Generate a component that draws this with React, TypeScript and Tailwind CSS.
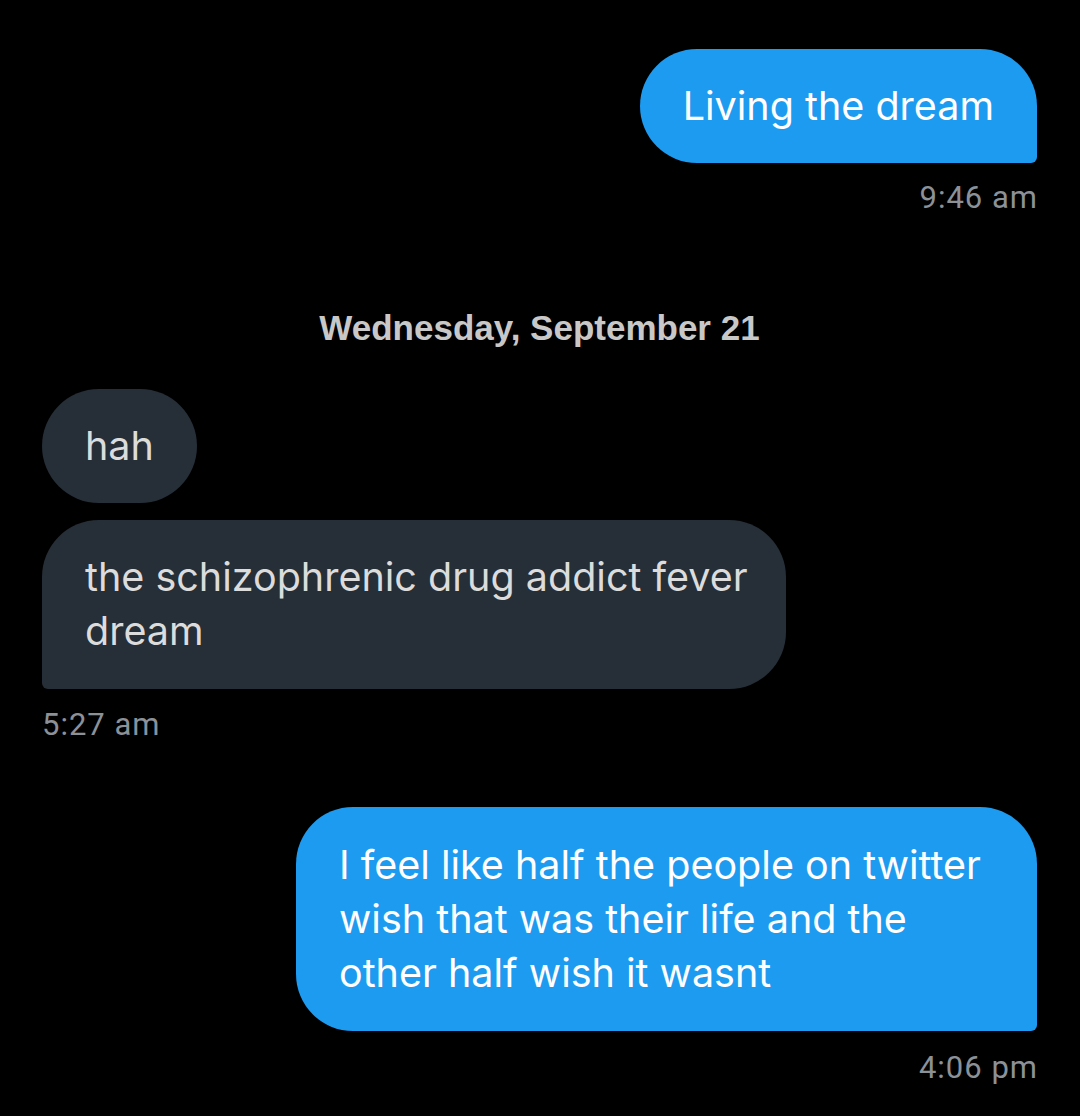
import React from "react";

function Stamp({ children, right }: { children: React.ReactNode; right?: boolean }) {
  return (
    <div
      className={`text-[31px] leading-[36px] tracking-[1px] text-[#8b9197] font-['Roboto',sans-serif] ${right ? "text-right -mr-[1px]" : "text-left"}`}
    >
      {children}
    </div>
  );
}

export default function App() {
  return (
    <div className="w-[1080px] h-[1116px] bg-black overflow-hidden pl-[42px] pr-[43px] pt-[49px]">
      <div className="flex justify-end">
        <div className="bg-[#1d9bf0] text-white rounded-[57px] rounded-br-[6px] px-[43px] py-[30px] text-[39.5px] leading-[54px] whitespace-nowrap font-['Inter',sans-serif]">
          Living the dream
        </div>
      </div>
      <div className="mt-[17px]">
        <Stamp right>9:46 am</Stamp>
      </div>
      <div className="mt-[92px] text-center text-[35px] leading-[40px] font-bold text-[#c8c8c8] font-['Liberation_Sans',Arial,sans-serif]">
        Wednesday, September 21
      </div>
      <div className="mt-[41px] flex flex-col items-start gap-[17px]">
        <div className="bg-[#262f37] text-[#dcdcdc] rounded-[57px] px-[43px] py-[30px] text-[39.5px] leading-[54px] whitespace-nowrap font-['Inter',sans-serif]">
          hah
        </div>
        <div className="bg-[#262f37] text-[#dcdcdc] rounded-[57px] rounded-bl-[6px] px-[43px] pt-[30px] pb-[31px] text-[39.5px] leading-[54px] whitespace-nowrap font-['Inter',sans-serif] w-[744px]">
          the schizophrenic drug addict fever
          <br />
          dream
        </div>
      </div>
      <div className="mt-[18px]">
        <Stamp>5:27 am</Stamp>
      </div>
      <div className="mt-[64px] flex justify-end">
        <div className="bg-[#1d9bf0] text-white rounded-[57px] rounded-br-[6px] px-[43px] pt-[31px] pb-[31px] text-[39.5px] leading-[54px] whitespace-nowrap font-['Inter',sans-serif] w-[741px]">
          I feel like half the people on twitter
          <br />
          wish that was their life and the
          <br />
          other half wish it wasnt
        </div>
      </div>
      <div className="mt-[19px]">
        <Stamp right>4:06 pm</Stamp>
      </div>
    </div>
  );
}
